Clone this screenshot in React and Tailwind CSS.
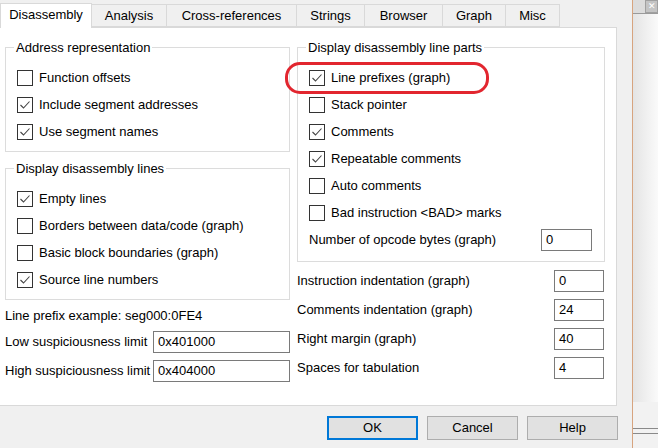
import React from "react";

const tabs = [
  { name: "Disassembly", w: "w-[92px]", active: true },
  { name: "Analysis", w: "w-[75px]" },
  { name: "Cross-references", w: "w-[130px]" },
  { name: "Strings", w: "w-[68px]" },
  { name: "Browser", w: "w-[78px]" },
  { name: "Graph", w: "w-[63px]" },
  { name: "Misc", w: "w-[54px]" },
];

const Check = ({ checked, label }) => (
  <div className="flex items-center h-[27px]">
    <span className="w-[16px] h-[16px] border border-[#333] bg-white flex items-center justify-center shrink-0">
      {checked && (
        <svg width="14" height="14" viewBox="0 0 14 14">
          <path d="M2.5 7 L5.5 10 L11.5 3.5" fill="none" stroke="#444" strokeWidth="1.1" />
        </svg>
      )}
    </span>
    <span className="ml-[6px] whitespace-nowrap">{label}</span>
  </div>
);

const Field = ({ value, w }) => (
  <div className={`${w} h-[22px] border border-[#7a7a7a] bg-white flex items-center pl-[4px] shrink-0`}>
    {value}
  </div>
);

const Group = ({ title, children, className }) => (
  <fieldset className={`border border-[#dcdcdc] pl-[11px] pt-[9px] pb-[6px] ${className}`}>
    <legend className="-ml-[3px] px-[2px] leading-[15px]">{title}</legend>
    {children}
  </fieldset>
);

const LabeledField = ({ label, value, w, className }) => (
  <div className={`flex items-center justify-between h-[22px] ${className}`}>
    <span className="whitespace-nowrap">{label}</span>
    <Field value={value} w={w} />
  </div>
);

export default function App() {
  return (
    <div className="relative w-[658px] h-[448px] overflow-hidden flex bg-white text-black text-[13px] font-['Liberation_Sans',Arial,sans-serif]">
      <div className="w-[632px] h-full bg-[#f0f0f0] flex flex-col shrink-0">
        {/* tabs */}
        <div className="flex items-end h-[28px] relative z-10">
          {tabs.map((t) =>
            t.active ? (
              <div
                key={t.name}
                className={`${t.w} h-[25px] bg-white border border-b-0 border-[#d9d9d9] flex items-center justify-center pb-[2px]`}
              >
                {t.name}
              </div>
            ) : (
              <div
                key={t.name}
                className={`${t.w} h-[23px] mb-[1px] bg-[#f0f0f0] border border-l-0 border-[#d9d9d9] flex items-center justify-center`}
              >
                {t.name}
              </div>
            )
          )}
        </div>

        {/* panel */}
        <div className="w-[617px] h-[379px] -mt-[1px] bg-white border-t border-r border-b border-[#d9d9d9] flex gap-[7px] pl-[5px] pt-[12px]">
          {/* left column */}
          <div className="w-[285px] flex flex-col">
            <Group title="Address representation">
              <Check label="Function offsets" />
              <Check checked label="Include segment addresses" />
              <Check checked label="Use segment names" />
            </Group>
            <Group title="Display disassembly lines" className="mt-[9px]">
              <Check checked label="Empty lines" />
              <Check label="Borders between data/code (graph)" />
              <Check label="Basic block boundaries (graph)" />
              <Check checked label="Source line numbers" />
            </Group>
            <div className="h-[22px] flex items-center mt-[5px]">Line prefix example: seg000:0FE4</div>
            <LabeledField label="Low suspiciousness limit" value="0x401000" w="w-[137px]" className="mt-[4px]" />
            <LabeledField label="High suspiciousness limit" value="0x404000" w="w-[137px]" className="mt-[7px]" />
          </div>

          {/* right column */}
          <div className="w-[308px] flex flex-col">
            <Group title="Display disassembly line parts" className="pr-[12px] pb-[10px]">
              <Check checked label="Line prefixes (graph)" />
              <Check label="Stack pointer" />
              <Check checked label="Comments" />
              <Check checked label="Repeatable comments" />
              <Check label="Auto comments" />
              <Check label="Bad instruction <BAD> marks" />
              <LabeledField label="Number of opcode bytes (graph)" value="0" w="w-[51px]" className="mt-[3px]" />
            </Group>
            <LabeledField label="Instruction indentation (graph)" value="0" w="w-[50px]" className="mt-[8px] pr-[1px]" />
            <LabeledField label="Comments indentation (graph)" value="24" w="w-[50px]" className="mt-[7px] pr-[1px]" />
            <LabeledField label="Right margin (graph)" value="40" w="w-[50px]" className="mt-[7px] pr-[1px]" />
            <LabeledField label="Spaces for tabulation" value="4" w="w-[50px]" className="mt-[7px] pr-[1px]" />
          </div>
        </div>

        {/* buttons */}
        <div className="flex justify-end gap-[9px] pr-[14px] mt-[10px]">
          <button className="w-[91px] h-[24px] bg-[#e1e1e1] border-2 border-[#0078d7]">OK</button>
          <button className="w-[91px] h-[24px] bg-[#e1e1e1] border border-[#adadad]">Cancel</button>
          <button className="w-[91px] h-[24px] bg-[#e1e1e1] border border-[#adadad]">Help</button>
        </div>
      </div>

      {/* window behind */}
      <div className="w-[1px] h-full bg-[#d7a47f] shrink-0" />
      <div className="flex-1 flex flex-col bg-gradient-to-r from-[#e4e4e4] to-[#fafafa]">
        <div className="h-[14px] bg-[#dcdcdc] border-b border-[#9a9a9a] flex justify-end">
          <div className="w-[13px] h-[13px] bg-[#c4c4c4] border border-[#a0a0a0] flex items-center justify-center text-[9px] leading-none text-white">
            ✕
          </div>
        </div>
        <div className="flex-1" />
        <div className="h-[46px] bg-[#f2f2f2] pt-[26px]">
          <div className="h-[1px] bg-[#8a8a8a]" />
          <div className="h-[1px] bg-[#8a8a8a] mt-[4px]" />
        </div>
      </div>

      {/* red annotation */}
      <div className="absolute left-[285px] top-[62px] w-[204px] h-[32px] border-[3px] border-[#e2262f] rounded-[15px] pointer-events-none" />
    </div>
  );
}
